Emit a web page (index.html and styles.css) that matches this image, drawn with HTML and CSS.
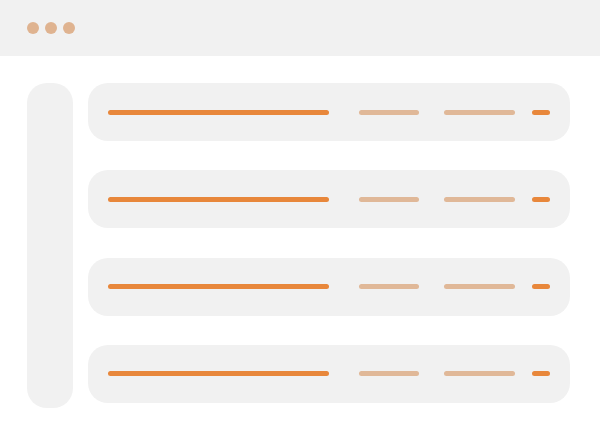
FILE: index.html
```html
<!DOCTYPE html>
<html>
<head>
<meta charset="utf-8">
<link rel="stylesheet" href="styles.css">
</head>
<body>
<div class="window">
  <div class="titlebar">
    <span class="dot"></span><span class="dot"></span><span class="dot"></span>
  </div>
  <div class="content">
    <div class="sidebar"></div>
    <div class="rows">
      <div class="row"><span class="bar main"></span><span class="bar b2"></span><span class="bar b3"></span><span class="bar b4"></span></div>
      <div class="row"><span class="bar main"></span><span class="bar b2"></span><span class="bar b3"></span><span class="bar b4"></span></div>
      <div class="row"><span class="bar main"></span><span class="bar b2"></span><span class="bar b3"></span><span class="bar b4"></span></div>
      <div class="row"><span class="bar main"></span><span class="bar b2"></span><span class="bar b3"></span><span class="bar b4"></span></div>
    </div>
  </div>
</div>
</body>
</html>
```
FILE: styles.css
```css
html, body {
  margin: 0;
  padding: 0;
  background: #ffffff;
  font-family: "Liberation Sans", sans-serif;
}
.window {
  width: 600px;
  height: 436px;
  overflow: hidden;
}
.titlebar {
  height: 56px;
  background: #f1f1f1;
  display: flex;
  align-items: center;
  padding-left: 27px;
  gap: 6px;
  box-sizing: border-box;
}
.dot {
  width: 12px;
  height: 12px;
  border-radius: 50%;
  background: #dfb390;
}
.content {
  display: flex;
  align-items: flex-start;
  padding: 27px 0 0 27px;
  gap: 15px;
}
.sidebar {
  width: 46px;
  height: 325px;
  background: #f1f1f1;
  border-radius: 20px;
  flex: none;
}
.rows {
  display: flex;
  flex-direction: column;
  gap: 29.33px;
  width: 482px;
}
.row {
  height: 58px;
  background: #f1f1f1;
  border-radius: 20px;
  display: flex;
  align-items: center;
  padding-left: 20px;
  box-sizing: border-box;
}
.bar {
  height: 5px;
  border-radius: 3px;
  flex: none;
}
.main {
  width: 221px;
  background: #e8873b;
}
.b2 {
  width: 60px;
  margin-left: 30px;
  background: #e0b898;
}
.b3 {
  width: 71px;
  margin-left: 25px;
  background: #e0b898;
}
.b4 {
  width: 18px;
  margin-left: 17px;
  background: #e8873b;
}
```
